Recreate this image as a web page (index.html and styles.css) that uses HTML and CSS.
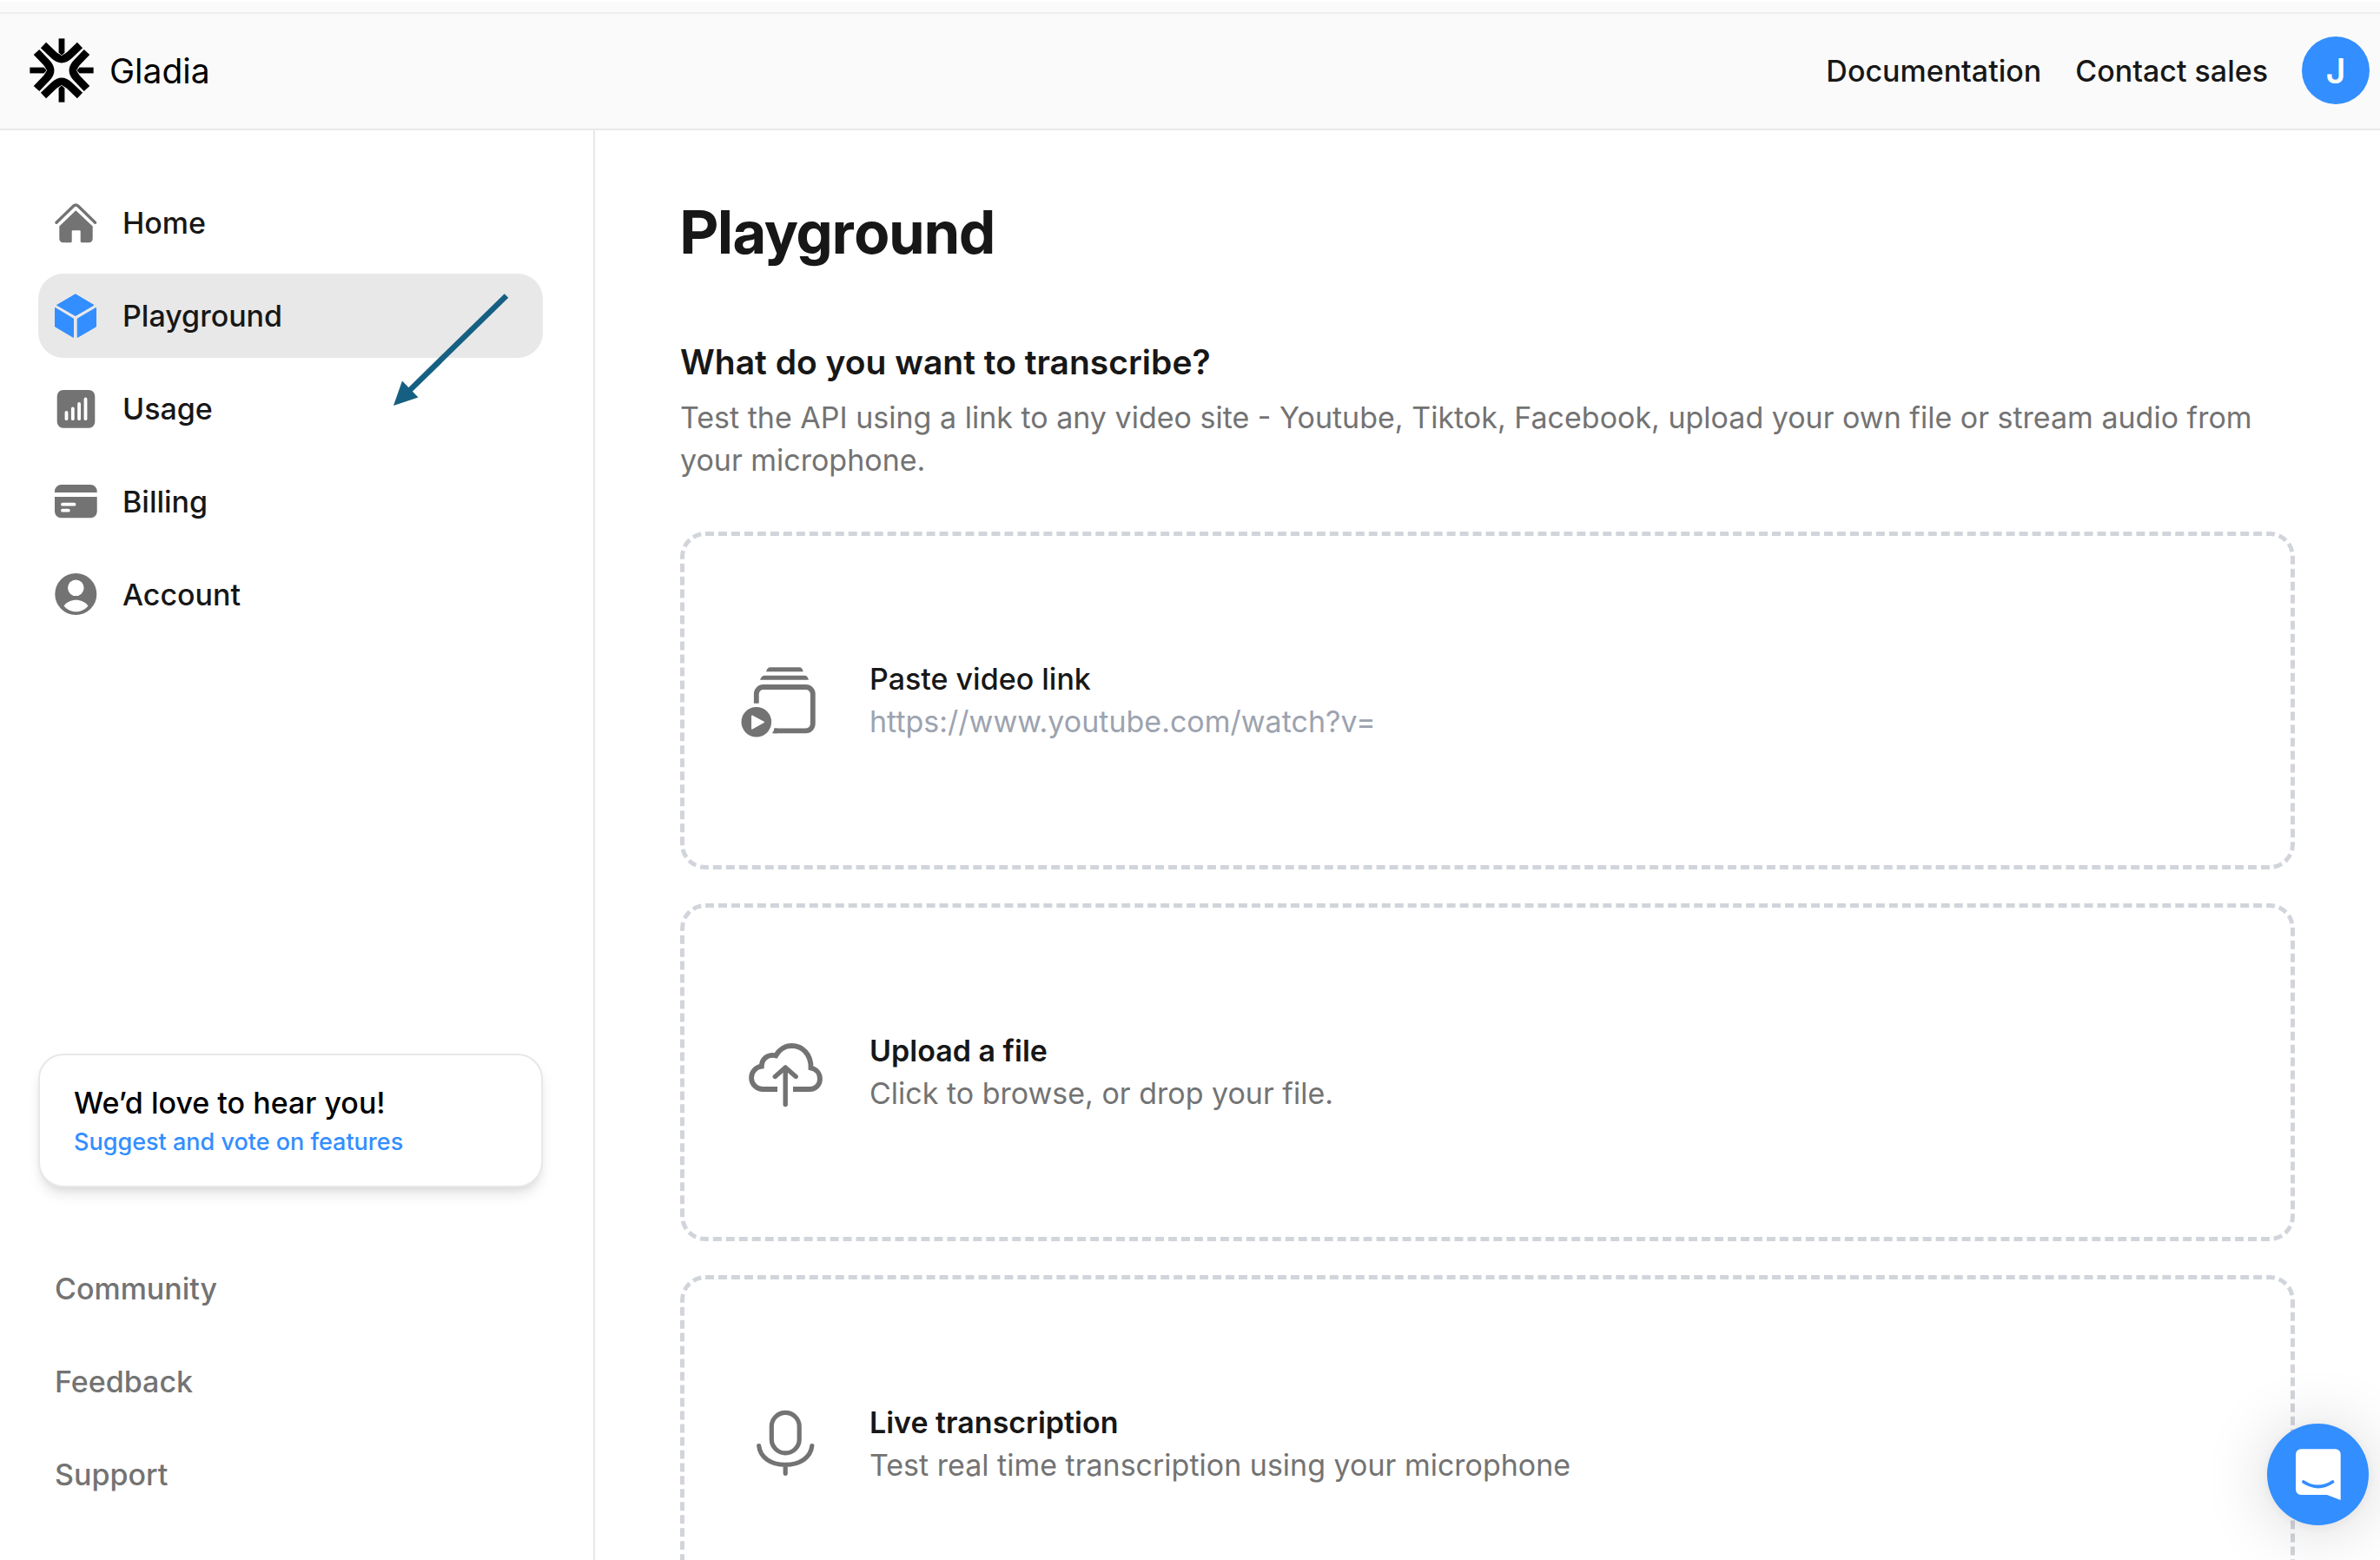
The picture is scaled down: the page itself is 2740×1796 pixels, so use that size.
FILE: index.html
```html
<!DOCTYPE html>
<html lang="en">
<head>
<meta charset="utf-8">
<title>Gladia – Playground</title>
<meta name="viewport" content="width=device-width, initial-scale=1">
<link rel="stylesheet" href="styles.css">
</head>
<body>
<div class="app">
  <div class="top-strip"></div>
  <header class="header">
    <a class="brand" href="#">
      <svg class="brand-mark" viewBox="0 0 74 74" aria-hidden="true">
        <g fill="none" stroke="#000" stroke-width="9">
          <path d="M16 8 28 19.500Q37 28 46 19.500L58 8"/>
          <path d="M16 66 28 54.500Q37 46 46 54.500L58 66"/>
          <path d="M8 16 19.500 28Q28 37 19.500 46L8 58"/>
          <path d="M66 16 54.500 28Q46 37 54.500 46L66 58"/>
        </g>
        <g stroke="#fafafa" stroke-width=".7">
          <path d="M33.200 0h7.600v16.500L37 20l-3.800-3.500z"/>
          <path d="M33.200 74h7.600V57.500L37 54l-3.800 3.500z"/>
          <path d="M0 33.200v7.600h16.500L20 37l-3.500-3.800z"/>
          <path d="M74 33.200v7.600H57.500L54 37l3.500-3.800z"/>
        </g>
      </svg>
      <span>Gladia</span>
    </a>
    <nav class="header-links" aria-label="Help">
      <a href="#">Documentation</a>
      <a href="#">Contact sales</a>
      <button class="avatar" type="button">J</button>
    </nav>
  </header>

  <div class="body">
    <aside class="sidebar">
      <nav class="nav" aria-label="Main">
        <a class="nav-item" href="#">
          <svg class="nav-icon" viewBox="0 0 48 48" aria-hidden="true">
            <path fill="none" stroke="currentColor" stroke-width="3.400" stroke-linecap="round" stroke-linejoin="round" d="M2 23.200 21.500 4.200Q24.300 2 27 4.200L46.500 23.200"/>
            <path fill="currentColor" d="M24.300 9.300 43.700 27.500V42a4.200 4.200 0 0 1-4.200 4.200h-8.300a1.500 1.500 0 0 1-1.500-1.500V33.300a1 1 0 0 0-1-1h-8a1 1 0 0 0-1 1v11.400a1.500 1.500 0 0 1-1.500 1.500H9.500A4.200 4.200 0 0 1 5.300 42V27.500z"/>
          </svg>
          Home
        </a>
        <a class="nav-item active" href="#" aria-current="page">
          <svg class="nav-icon" viewBox="0 0 48 48" aria-hidden="true">
            <g fill="currentColor" stroke="currentColor" stroke-width="1" stroke-linejoin="round">
              <path d="M23.800-1.200 45 11.300 23.800 23.500 2.500 11.300z"/>
              <path d="M.5 14.400 21.500 27v21.400L.5 36z"/>
              <path d="M26.200 27 47.500 14.400V36L26.200 48.400z"/>
            </g>
          </svg>
          Playground
        </a>
        <a class="nav-item" href="#">
          <svg class="nav-icon" viewBox="0 0 48 48" aria-hidden="true">
            <rect x="2.700" y="2" width="43.600" height="43.700" rx="7" fill="currentColor"/>
            <path stroke="#fff" stroke-width="3.800" stroke-linecap="round" d="M13.500 28v7.200M20.800 23.500v11.700M28.100 18v17.200M35.500 12.500v22.700"/>
          </svg>
          Usage
        </a>
        <a class="nav-item" href="#">
          <svg class="nav-icon" viewBox="0 0 48 48" aria-hidden="true">
            <path fill="currentColor" d="M0 13v-1.500A7.500 7.500 0 0 1 7.500 4h33.700a7.500 7.500 0 0 1 7.500 7.500V13zM0 18h48.700v17a7.400 7.400 0 0 1-7.500 7.300H7.500A7.400 7.400 0 0 1 0 35z"/>
            <path stroke="#fff" stroke-width="3.800" stroke-linecap="round" d="M9 26.700h13.500M9 33.700h6.800"/>
          </svg>
          Billing
        </a>
        <a class="nav-item" href="#">
          <svg class="nav-icon" viewBox="0 0 48 48" aria-hidden="true">
            <circle cx="24.300" cy="23" r="24" fill="currentColor"/>
            <circle cx="24.300" cy="15.800" r="9.300" fill="#fff"/>
            <path fill="#fff" d="M10.500 36.500C17 27.500 32 27.500 38.500 36.500 31.500 45.500 17.500 45.500 10.500 36.500z"/>
          </svg>
          Account
        </a>
      </nav>

      <section class="feedback-card">
        <p class="feedback-title">We’d love to hear you!</p>
        <a class="feedback-link" href="#">Suggest and vote on features</a>
      </section>

      <nav class="nav" aria-label="Resources">
        <a class="nav-item muted" href="#">Community</a>
        <a class="nav-item muted" href="#">Feedback</a>
        <a class="nav-item muted" href="#">Support</a>
      </nav>

      <svg class="pointer-arrow" viewBox="0 0 133 129" aria-hidden="true">
        <path d="M130 2.500 19 111" fill="none" stroke="#156082" stroke-width="6.500"/>
        <path d="M0 129 10 100.500 28.500 119.500z" fill="#156082"/>
      </svg>
    </aside>

    <main class="main">
      <h1 class="title">Playground</h1>
      <h2 class="subtitle">What do you want to transcribe?</h2>
      <p class="intro">Test the API using a link to any video site - Youtube, Tiktok, Facebook, upload your own file or stream audio from your microphone.</p>

      <div class="sources">
        <div class="source">
          <svg class="source-icon" viewBox="0 0 97 97" aria-hidden="true">
            <path fill="currentColor" d="M26 15.200Q27.500 10.300 30.500 10.300H64.500Q67.500 10.300 68.700 15.200zM19 24.700Q21 19.700 24 19.700H70.500Q73.500 19.700 75 24.700z"/>
            <path fill="none" stroke="currentColor" stroke-width="5.800" d="M14.800 51.700V41a8 8 0 0 1 8-8h49a8 8 0 0 1 8 8v34.300a8 8 0 0 1-8 8H35"/>
            <path fill="currentColor" d="M36.200 80.400 33 86.200h6v-5.800z"/>
            <circle cx="14.800" cy="73.200" r="17.300" fill="currentColor"/>
            <path fill="#fff" stroke="#fff" stroke-width="1.500" stroke-linejoin="round" d="M9.800 66.200 23.300 73.300 9.800 80.800z"/>
          </svg>
          <div class="source-text">
            <label class="source-title medium" for="video-url">Paste video link</label>
            <input class="source-input" id="video-url" type="url" placeholder="https://www.youtube.com/watch?v=">
          </div>
        </div>
        <button class="source" type="button">
          <svg class="source-icon" viewBox="0 0 97 97" aria-hidden="true">
            <g fill="none" stroke="currentColor">
              <path stroke-width="5.800" d="M39 68H21.500A13.200 13.200 0 0 1 20.800 41.700C20.800 34 27 27 37.300 29.300C41 22 48 18 55.500 18C68 18 78 28 77.500 43.500C84 45 88 50 88 56C88 63 83 68 76 68H57"/>
              <path stroke-width="5.400" stroke-linecap="round" stroke-linejoin="round" d="M48.200 43v42.500M36.300 53.500 48.200 43 60.200 53.500"/>
            </g>
          </svg>
          <span class="source-text">
            <span class="source-title">Upload a file</span>
            <span class="source-note">Click to browse, or drop your file.</span>
          </span>
        </button>
        <button class="source" type="button">
          <svg class="source-icon" viewBox="0 0 97 97" aria-hidden="true">
            <g fill="none" stroke="currentColor" stroke-width="5.200" stroke-linecap="round">
              <rect x="32.300" y="12.300" width="31.900" height="46.600" rx="15.950"/>
              <path d="M17.700 50.500C19 63.500 31 72.300 48.200 72.300S77.500 63.500 78.800 50.500M48.200 72.300v10"/>
            </g>
          </svg>
          <span class="source-text">
            <span class="source-title">Live transcription</span>
            <span class="source-note">Test real time transcription using your microphone</span>
          </span>
        </button>
      </div>
    </main>
  </div>
</div>

<button class="chat" type="button" aria-label="Open chat">
  <svg class="chat-icon" viewBox="0 0 117 117" aria-hidden="true">
    <path fill="#fff" d="M39 29.300h39.700a6 6 0 0 1 6 6V88L69 82H39a6 6 0 0 1-6-6V35.300a6 6 0 0 1 6-6z"/>
    <path fill="none" stroke="#338eff" stroke-width="3.700" stroke-linecap="round" d="M41.900 67Q58.800 78 75.500 67"/>
  </svg>
</button>
</body>
</html>
```
FILE: styles.css
```css
* {
  box-sizing: border-box;
}

body {
  margin: 0;
  background: #fff;
  color: #171717;
  font-family: Inter, "Liberation Sans", sans-serif;
  font-size: 34px;
  line-height: 49px;
}

a {
  color: inherit;
  text-decoration: none;
}

button {
  border: 0;
  padding: 0;
  background: none;
  color: inherit;
  font: inherit;
  text-align: left;
  cursor: pointer;
}

svg {
  display: block;
  overflow: visible;
}

.app {
  display: flex;
  flex-direction: column;
  height: 100vh;
}

/* Header */

.top-strip {
  flex: none;
  height: 16px;
  border-top: 2px solid #fff;
  border-bottom: 2px solid #ededed;
  background: #fafafa;
}

.header {
  display: flex;
  flex: none;
  align-items: center;
  justify-content: space-between;
  height: 134px;
  padding: 0 12px 2px 34px;
  border-bottom: 2px solid #e8e8e8;
  background: #fafafa;
}

.brand {
  display: flex;
  align-items: center;
  gap: 18px;
  color: #000;
  font-size: 39px;
}

.brand-mark {
  width: 74px;
  height: 74px;
}

.header-links {
  display: flex;
  align-items: center;
  gap: 39px;
  font-weight: 500;
}

.avatar {
  width: 78px;
  height: 78px;
  border-radius: 50%;
  background: #338eff;
  color: #fff;
  font-size: 39px;
  font-weight: 600;
  text-align: center;
}

/* Sidebar */

.body {
  display: flex;
  flex: 1;
  min-height: 0;
}

.sidebar {
  position: relative;
  display: flex;
  flex: none;
  flex-direction: column;
  width: 685px;
  padding: 58px 58px 50px 44px;
  border-right: 2px solid #e8e8e8;
}

.nav {
  display: flex;
  flex-direction: column;
  gap: 10px;
}

.nav-item {
  display: flex;
  align-items: center;
  gap: 30px;
  height: 97px;
  padding: 0 19px;
  border-radius: 29px;
  font-weight: 500;
}

.nav-item.active {
  background: #e8e8e8;
}

.nav-item.muted {
  color: #737373;
}

.nav-icon {
  width: 48px;
  height: 48px;
  color: #737373;
}

.active .nav-icon {
  color: #338eff;
}

.feedback-card {
  margin: auto 0 68px;
  padding: 30px 39px;
  border: 2px solid #e8e8e8;
  border-radius: 29px;
  background: #fff;
  box-shadow: 0 10px 15px -2px rgba(0, 0, 0, 0.1), 0 5px 10px -5px rgba(0, 0, 0, 0.1);
}

.feedback-title {
  margin: 0;
  color: #000;
  font-weight: 500;
}

.feedback-link {
  display: block;
  color: #338eff;
  font-size: 27px;
  font-weight: 500;
  line-height: 41px;
}

.pointer-arrow {
  position: absolute;
  top: 188px;
  left: 453px;
  width: 133px;
  height: 129px;
  pointer-events: none;
}

/* Main */

.main {
  flex: 1;
  min-width: 0;
  padding: 75px 98px 0;
  overflow: hidden;
}

.title {
  margin: 0 0 79px;
  font-family: "Inter Display", Inter, "Liberation Sans", sans-serif;
  font-size: 69px;
  font-variation-settings: "opsz" 28;
  font-weight: 700;
  line-height: 84px;
}

.subtitle {
  margin: 0 0 10px;
  font-size: 39px;
  font-weight: 600;
  line-height: 58px;
}

.intro {
  margin: 0 0 58px;
  color: #737373;
}

.sources {
  display: grid;
  gap: 39px;
}

.source {
  display: flex;
  align-items: center;
  gap: 48px;
  width: 100%;
  min-height: 389px;
  padding: 0 68px;
  border: 5px dashed #d1d5db;
  border-radius: 29px;
}

.source-icon {
  flex: none;
  width: 97px;
  height: 97px;
  color: #737373;
}

.source-text {
  display: flex;
  flex: 1;
  flex-direction: column;
  padding-bottom: 2px;
}

.source-title {
  font-weight: 600;
}

.source-title.medium {
  font-weight: 500;
}

.source-note {
  color: #737373;
}

.source-input {
  width: 100%;
  height: 49px;
  padding: 0;
  border: 0;
  outline: 0;
  background: none;
  color: #171717;
  font: inherit;
}

.source-input::placeholder {
  color: #9ca3af;
  opacity: 1;
}

/* Chat launcher */

.chat {
  position: fixed;
  right: 13px;
  bottom: 40px;
  width: 117px;
  height: 117px;
  border-radius: 50%;
  background: #338eff;
  box-shadow: 0 2px 15px rgba(0, 0, 0, 0.06), 0 5px 78px rgba(0, 0, 0, 0.16);
}

.chat-icon {
  width: 117px;
  height: 117px;
}
```
